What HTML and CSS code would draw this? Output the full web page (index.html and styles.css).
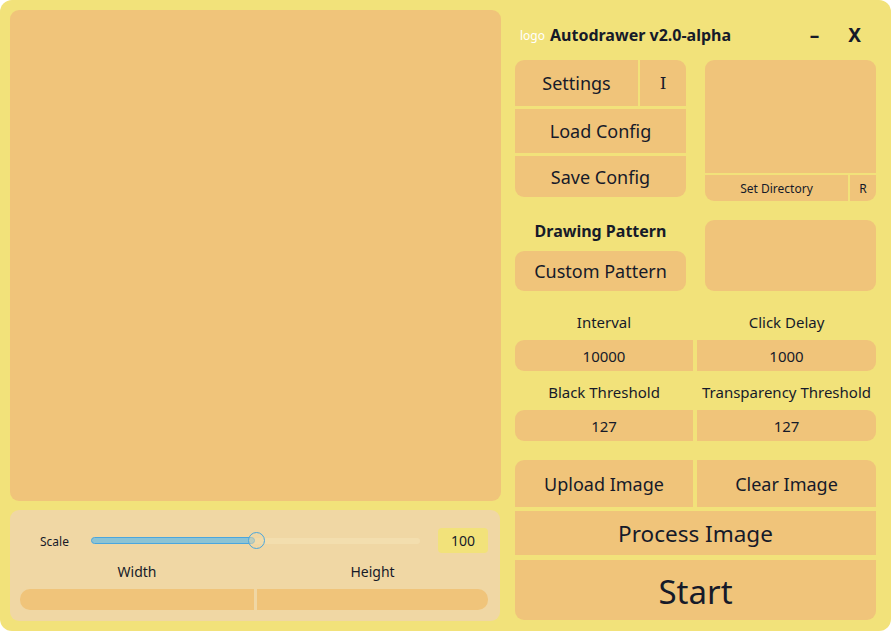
FILE: index.html
```html
<!DOCTYPE html>
<html>
<head>
<meta charset="utf-8">
<link rel="stylesheet" href="styles.css">
</head>
<body>
<div class="app">
  <div class="left">
    <div class="canvas"></div>
    <div class="controls">
      <div class="scale-row">
        <span class="scale-label">Scale</span>
        <div class="slider">
          <div class="track"></div>
          <div class="fill" style="width:50%"></div>
          <div class="thumb" style="left:50.3%"></div>
        </div>
        <div class="scale-value">100</div>
      </div>
      <div class="dims">
        <div class="dim-col"><div class="dim-label">Width</div><div class="dim-input dim-l"></div></div>
        <div class="dim-col"><div class="dim-label">Height</div><div class="dim-input dim-r"></div></div>
      </div>
    </div>
  </div>
  <div class="right">
    <div class="header">
      <span class="logo">logo</span>
      <span class="title">Autodrawer v2.0-alpha</span>
      <span class="spacer"></span>
      <span class="win-btn min">–</span>
      <span class="win-btn close">X</span>
    </div>
    <div class="row1">
      <div class="cfg">
        <div class="cfg-top">
          <div class="btn b18 settings">Settings</div>
          <div class="btn info">I</div>
        </div>
        <div class="btn b18 load">Load Config</div>
        <div class="btn b18 save">Save Config</div>
      </div>
      <div class="dir">
        <div class="dir-view"></div>
        <div class="dir-bar">
          <div class="btn small setdir">Set Directory</div>
          <div class="btn small rbtn">R</div>
        </div>
      </div>
    </div>
    <div class="row2">
      <div class="pattern">
        <div class="pattern-label">Drawing Pattern</div>
        <div class="btn b18 custom">Custom Pattern</div>
      </div>
      <div class="pattern-box"></div>
    </div>
    <div class="fields">
      <div class="flabel">Interval</div>
      <div class="flabel">Click Delay</div>
      <div class="finput fl">10000</div>
      <div class="finput fr">1000</div>
      <div class="flabel">Black Threshold</div>
      <div class="flabel">Transparency Threshold</div>
      <div class="finput fl">127</div>
      <div class="finput fr">127</div>
    </div>
    <div class="actions">
      <div class="act-top">
        <div class="btn b20 upload">Upload Image</div>
        <div class="btn b20 clear">Clear Image</div>
      </div>
      <div class="btn process">Process Image</div>
      <div class="btn start">Start</div>
    </div>
  </div>
</div>
</body>
</html>
```

FILE: styles.css
```css
* { box-sizing: border-box; }
html, body { margin: 0; padding: 0; background: #ffffff; }
body {
  font-family: "Noto Sans", "Open Sans", sans-serif;
  color: #161a29;
}
.app {
  width: 891px;
  height: 631px;
  background: #f2e27a;
  border-radius: 12px;
  padding: 10px 15px 0 10px;
  display: flex;
  gap: 14px;
}
.left {
  width: 491px;
  display: flex;
  flex-direction: column;
}
.canvas {
  height: 491px;
  background: #f0c47a;
  border-radius: 9px;
}
.controls {
  margin-top: 9px;
  width: 490px;
  height: 111px;
  background: #f0d7a4;
  border-radius: 9px;
  padding: 18px 12px 0 10px;
}
.scale-row {
  display: flex;
  align-items: center;
  height: 25px;
}
.scale-label {
  font-size: 12px;
  width: 71px;
  padding-left: 20px;
  padding-top: 1px;
}
.slider {
  position: relative;
  width: 330px;
  height: 17px;
}
.track {
  position: absolute;
  left: 0; right: 0; top: 6px;
  height: 6px;
  background: #f3deae;
  border-radius: 3px;
}
.fill {
  position: absolute;
  left: 0; top: 5px;
  height: 7px;
  background: #8cc3d3;
  border: 1px solid #4aa6de;
  border-radius: 4px;
}
.thumb {
  position: absolute;
  top: 0;
  width: 17px;
  height: 17px;
  margin-left: -8px;
  border: 1.5px solid #4aa6de;
  border-radius: 50%;
  background: rgba(240, 215, 164, 0.5);
}
.scale-value {
  margin-left: 18px;
  width: 50px;
  height: 25px;
  background: #f2e27a;
  border-radius: 4px;
  font-size: 14px;
  display: flex;
  align-items: center;
  justify-content: center;
}
.dims {
  display: flex;
  gap: 3px;
  margin-top: 8px;
}
.dim-col { flex: 1; display: flex; flex-direction: column; align-items: stretch; }
.dim-col:first-child { flex: 0 0 234px; }
.dim-label {
  text-align: center;
  font-size: 14px;
  height: 22px;
  line-height: 22px;
}
.dim-input {
  margin-top: 6px;
  height: 21px;
  background: #f0c47a;
}
.dim-l { border-radius: 10px 0 0 10px; }
.dim-r { border-radius: 0 10px 10px 0; }

.right {
  width: 361px;
  display: flex;
  flex-direction: column;
}
.header {
  height: 50px;
  display: flex;
  align-items: center;
  padding-left: 5px;
}
.logo { color: #ffffff; font-size: 12px; margin-right: 5px; }
.title { font-weight: bold; font-size: 16px; }
.spacer { flex: 1; }
.win-btn { font-weight: bold; font-size: 19px; }
.min { margin-right: 29px; }
.close { margin-right: 15px; }

.btn {
  background: #f0c47a;
  display: flex;
  align-items: center;
  justify-content: center;
  white-space: nowrap;
}
.b18 { font-size: 18px; }
.b20 { font-size: 18px; }
.small { font-size: 12px; }

.row1 {
  display: flex;
  gap: 19px;
  height: 141px;
}
.cfg {
  width: 171px;
  display: flex;
  flex-direction: column;
  gap: 3px;
}
.cfg-top { display: flex; gap: 2px; height: 46px; }
.settings { width: 123px; border-top-left-radius: 9px; }
.info { flex: 1; font-family: "DejaVu Serif", "Liberation Serif", serif; font-size: 17px; border-top-right-radius: 9px; }
.load { height: 44px; }
.save { height: 41px; border-radius: 0 0 9px 9px; }
.dir {
  width: 171px;
  display: flex;
  flex-direction: column;
  gap: 2px;
}
.dir-view { height: 113px; background: #f0c47a; border-radius: 9px 9px 0 0; }
.dir-bar { display: flex; gap: 2px; height: 26px; }
.setdir { width: 143px; border-bottom-left-radius: 9px; }
.rbtn { flex: 1; border-bottom-right-radius: 9px; }

.row2 {
  margin-top: 19px;
  display: flex;
  gap: 19px;
  height: 71px;
}
.pattern { width: 171px; display: flex; flex-direction: column; }
.pattern-label {
  font-weight: bold;
  font-size: 16px;
  text-align: center;
  height: 31px;
  line-height: 22px;
}
.custom { height: 40px; border-radius: 9px; }
.pattern-box { width: 171px; background: #f0c47a; border-radius: 9px; }

.fields {
  margin-top: 20px;
  display: grid;
  grid-template-columns: 178px 179px;
  grid-template-rows: 22px 31px 25px 31px;
  column-gap: 4px;
  row-gap: 7px;
}
.flabel {
  text-align: center;
  font-size: 15px;
  line-height: 22px;
  white-space: nowrap;
  align-self: end;
}
.finput {
  background: #f0c47a;
  font-size: 15px;
  display: flex;
  align-items: center;
  justify-content: center;
}
.fl { border-radius: 9px 0 0 9px; }
.fr { border-radius: 0 9px 9px 0; }

.actions {
  margin-top: 19px;
  display: flex;
  flex-direction: column;
}
.act-top { display: flex; gap: 4px; height: 47px; }
.upload { width: 178px; border-top-left-radius: 9px; }
.clear { flex: 1; border-top-right-radius: 9px; }
.process { margin-top: 4px; height: 44px; font-size: 22.5px; }
.start { margin-top: 5px; height: 60px; font-size: 33px; padding-top: 2px; border-radius: 0 0 9px 9px; }
```
